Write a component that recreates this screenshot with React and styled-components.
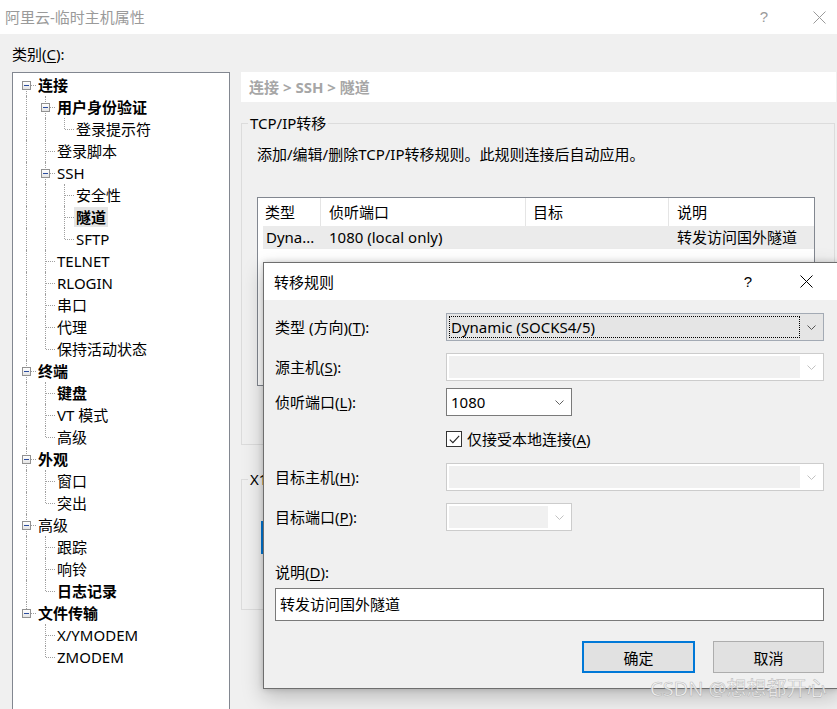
import React from "react";
import styled, { createGlobalStyle } from "styled-components";

const GlobalStyle = createGlobalStyle`
  html, body {
    margin: 0;
    padding: 0;
    background: #f0f0f0;
    overflow: hidden;
  }
  body {
    font-family: "Segoe UI", "Noto Sans", "Noto Sans CJK SC", sans-serif;
    font-size: 15px;
    color: #000;
  }
  * {
    box-sizing: border-box;
  }
  u {
    text-underline-offset: 2px;
  }
`;

const TREE = [
  {
    label: "连接",
    bold: true,
    children: [
      { label: "用户身份验证", bold: true, children: [{ label: "登录提示符" }] },
      { label: "登录脚本" },
      {
        label: "SSH",
        children: [
          { label: "安全性" },
          { label: "隧道", bold: true, selected: true },
          { label: "SFTP" },
        ],
      },
      { label: "TELNET" },
      { label: "RLOGIN" },
      { label: "串口" },
      { label: "代理" },
      { label: "保持活动状态" },
    ],
  },
  {
    label: "终端",
    bold: true,
    children: [{ label: "键盘", bold: true }, { label: "VT 模式" }, { label: "高级" }],
  },
  { label: "外观", bold: true, children: [{ label: "窗口" }, { label: "突出" }] },
  {
    label: "高级",
    children: [{ label: "跟踪" }, { label: "响铃" }, { label: "日志记录", bold: true }],
  },
  { label: "文件传输", bold: true, children: [{ label: "X/YMODEM" }, { label: "ZMODEM" }] },
];

// walk the tree into rows, remembering which ancestors were last in their list
function flatten(nodes, ancestorsLast = [], out = []) {
  nodes.forEach((node, i) => {
    const isLast = i === nodes.length - 1;
    out.push({
      ...node,
      ancestorsLast,
      isLast,
      isFirstRoot: ancestorsLast.length === 0 && i === 0,
    });
    if (node.children) flatten(node.children, [...ancestorsLast, isLast], out);
  });
  return out;
}

const ROWS = flatten(TREE);

function Chevron({ color }) {
  return (
    <svg width="9" height="5" viewBox="0 0 9 5">
      <path d="M0.5 0.5 L4.5 4.5 L8.5 0.5" stroke={color} strokeWidth="1" fill="none" />
    </svg>
  );
}

function CloseIcon({ color }) {
  return (
    <svg width="13" height="13" viewBox="0 0 13 13">
      <path d="M0.5 0.5 L12.5 12.5 M12.5 0.5 L0.5 12.5" stroke={color} strokeWidth="1" fill="none" />
    </svg>
  );
}

function App() {
  return (
    <Root>
      <GlobalStyle />
      <TitleBar $height={34} $padLeft={5} $padRight={11}>
        <WindowTitle $color="#9a9a9a">阿里云-临时主机属性</WindowTitle>
        <TitleActions $gap={45}>
          <HelpGlyph $color="#9a9a9a">?</HelpGlyph>
          <CloseIcon color="#9a9a9a" />
        </TitleActions>
      </TitleBar>

      <Body>
        <CategoryLabel>
          类别(<u>C</u>):
        </CategoryLabel>
        <Columns>
          <TreePane>
            {ROWS.map((row, i) => (
              <TreeRow key={i}>
                {row.ancestorsLast.map((last, d) => (
                  <LineCell key={d} $kind={last ? "blank" : "pipe"} />
                ))}
                <LineCell $kind={row.isFirstRoot ? "start" : row.isLast ? "elbow" : "tee"}>
                  {row.children && (
                    <Expander>
                      <Minus />
                    </Expander>
                  )}
                </LineCell>
                <NodeLabel $bold={row.bold} $selected={row.selected}>
                  {row.label}
                </NodeLabel>
              </TreeRow>
            ))}
          </TreePane>

          <RightPane>
            <Breadcrumb>连接 &gt; SSH &gt; 隧道</Breadcrumb>

            <Group $mt={11}>
              <Legend>TCP/IP转移</Legend>
              <GroupBody $pad="11px 20px 58px 15px">
                <Description>添加/编辑/删除TCP/IP转移规则。此规则连接后自动应用。</Description>
                <ListView>
                  <ListHeader>
                    <HeaderCell $pl={7}>类型</HeaderCell>
                    <HeaderCell $pl={8}>侦听端口</HeaderCell>
                    <HeaderCell $pl={7}>目标</HeaderCell>
                    <HeaderCell $pl={8} $last>
                      说明
                    </HeaderCell>
                  </ListHeader>
                  <ListRow>
                    <RowCell $pl={3}>Dyna...</RowCell>
                    <RowCell $pl={8}>1080 (local only)</RowCell>
                    <RowCell $pl={8} />
                    <RowCell $pl={8}>转发访问国外隧道</RowCell>
                  </ListRow>
                </ListView>
              </GroupBody>
            </Group>

            <Group $mt={24}>
              <Legend>X11转移</Legend>
              <GroupBody $pad="32px 0 55px 19px">
                <HiddenButton>设置</HiddenButton>
              </GroupBody>
            </Group>
          </RightPane>
        </Columns>
      </Body>

      <Dialog>
        <TitleBar $height={37} $padLeft={10} $padRight={25}>
          <WindowTitle $color="#000">转移规则</WindowTitle>
          <TitleActions $gap={48}>
            <HelpGlyph $color="#000">?</HelpGlyph>
            <CloseIcon color="#000" />
          </TitleActions>
        </TitleBar>

        <DialogBody>
          <FormRow $mt={13}>
            <FieldLabel>
              类型 (方向)(<u>T</u>):
            </FieldLabel>
            <Combo $variant="focus" $width={378}>
              <ComboField $variant="focus">Dynamic (SOCKS4/5)</ComboField>
              <ComboArrow>
                <Chevron color="#555" />
              </ComboArrow>
            </Combo>
          </FormRow>

          <FormRow $mt={12}>
            <FieldLabel>
              源主机(<u>S</u>):
            </FieldLabel>
            <Combo $variant="disabled" $width={378}>
              <ComboField $variant="disabled" />
              <ComboArrow>
                <Chevron color="#c2c2c2" />
              </ComboArrow>
            </Combo>
          </FormRow>

          <FormRow $mt={7}>
            <FieldLabel>
              侦听端口(<u>L</u>):
            </FieldLabel>
            <Combo $variant="normal" $width={126}>
              <ComboField $variant="normal">1080</ComboField>
              <ComboArrow>
                <Chevron color="#606060" />
              </ComboArrow>
            </Combo>
          </FormRow>

          <FormRow $mt={15}>
            <span />
            <CheckLine>
              <CheckBox>
                <svg width="11" height="9" viewBox="0 0 11 9">
                  <path d="M0.8 4.6 L3.9 7.7 L10.2 0.8" stroke="#222" strokeWidth="1.1" fill="none" />
                </svg>
              </CheckBox>
              <span>
                仅接受本地连接(<u>A</u>)
              </span>
            </CheckLine>
          </FormRow>

          <FormRow $mt={16}>
            <FieldLabel>
              目标主机(<u>H</u>):
            </FieldLabel>
            <Combo $variant="disabled" $width={378}>
              <ComboField $variant="disabled" />
              <ComboArrow>
                <Chevron color="#c2c2c2" />
              </ComboArrow>
            </Combo>
          </FormRow>

          <FormRow $mt={12}>
            <FieldLabel>
              目标端口(<u>P</u>):
            </FieldLabel>
            <Combo $variant="disabled" $width={126}>
              <ComboField $variant="disabled" />
              <ComboArrow>
                <Chevron color="#c2c2c2" />
              </ComboArrow>
            </Combo>
          </FormRow>

          <NoteLabel>
            说明(<u>D</u>):
          </NoteLabel>
          <TextInput>转发访问国外隧道</TextInput>

          <ButtonRow>
            <DialogButton $default $width={113}>
              确定
            </DialogButton>
            <DialogButton $width={111}>取消</DialogButton>
          </ButtonRow>
        </DialogBody>
      </Dialog>

      <Watermark>CSDN @想想都开心</Watermark>
    </Root>
  );
}

export default App;

const Root = styled.div`
  position: relative;
  width: 837px;
  height: 709px;
  overflow: hidden;
  background: #f0f0f0;
`;

const TitleBar = styled.div`
  display: flex;
  align-items: center;
  justify-content: space-between;
  height: ${({ $height }) => $height}px;
  padding: 0 ${({ $padRight }) => $padRight}px 0 ${({ $padLeft }) => $padLeft}px;
  background: #fff;
`;

const WindowTitle = styled.span`
  color: ${({ $color }) => $color};
  line-height: 20px;
`;

const TitleActions = styled.div`
  display: flex;
  align-items: center;
  gap: ${({ $gap }) => $gap}px;
`;

const HelpGlyph = styled.span`
  color: ${({ $color }) => $color};
  font-family: "Liberation Sans", sans-serif;
  font-size: 15px;
  line-height: 20px;
`;

const Body = styled.div`
  padding: 10px 0 0 12px;
`;

const CategoryLabel = styled.div`
  line-height: 20px;
`;

const Columns = styled.div`
  display: flex;
  align-items: flex-start;
  gap: 11px;
  margin-top: 8px;
`;

const TreePane = styled.div`
  flex: none;
  width: 218px;
  height: 660px;
  padding: 1px 0 0 4px;
  border: 1px solid #828790;
  background: #fff;
`;

const TreeRow = styled.div`
  display: flex;
  align-items: center;
  height: 22px;
`;

const LineCell = styled.span`
  position: relative;
  flex: none;
  width: 19px;
  height: 22px;

  &::before {
    content: "";
    position: absolute;
    left: 9px;
    top: ${({ $kind }) => ($kind === "start" ? "11px" : "0")};
    height: ${({ $kind }) => ($kind === "elbow" || $kind === "start" ? "11px" : "22px")};
    border-left: 1px dotted #a0a0a0;
    display: ${({ $kind }) => ($kind === "blank" ? "none" : "block")};
  }

  &::after {
    content: "";
    position: absolute;
    left: 10px;
    top: 11px;
    width: 9px;
    border-top: 1px dotted #a0a0a0;
    display: ${({ $kind }) => ($kind === "pipe" || $kind === "blank" ? "none" : "block")};
  }
`;

const Expander = styled.span`
  position: absolute;
  left: 5px;
  top: 7px;
  z-index: 1;
  display: flex;
  align-items: center;
  justify-content: center;
  width: 9px;
  height: 9px;
  border: 1px solid #919191;
  background: linear-gradient(#ffffff, #e4e4e4);
`;

const Minus = styled.span`
  width: 5px;
  height: 1px;
  background: #2c4d9e;
`;

const NodeLabel = styled.span`
  height: 20px;
  padding: 0 2px;
  line-height: 20px;
  white-space: nowrap;
  font-weight: ${({ $bold }) => ($bold ? 700 : 400)};
  background: ${({ $selected }) => ($selected ? "#e5e5e5" : "transparent")};
`;

const RightPane = styled.div`
  flex: none;
  width: 595px;
`;

const Breadcrumb = styled.div`
  height: 30px;
  padding-left: 8px;
  line-height: 30px;
  background: #fff;
  color: #a6a6a6;
  font-weight: 700;
`;

const Group = styled.fieldset`
  margin: ${({ $mt }) => $mt}px 0 0;
  padding: 0;
  width: 594px;
  border: 1px solid #dcdcdc;
  min-width: 0;
`;

const Legend = styled.legend`
  margin-left: 6px;
  padding: 0 2px;
  line-height: 20px;
`;

const GroupBody = styled.div`
  padding: ${({ $pad }) => $pad};
`;

const Description = styled.div`
  line-height: 20px;
`;

const ListView = styled.div`
  margin-top: 33px;
  width: 558px;
  height: 189px;
  border: 1px solid #828790;
  background: #fff;
`;

const ListHeader = styled.div`
  display: grid;
  grid-template-columns: 63px 205px 143px 1fr;
  height: 28px;
`;

const HeaderCell = styled.div`
  padding-left: ${({ $pl }) => $pl}px;
  line-height: 28px;
  border-right: ${({ $last }) => ($last ? "none" : "1px solid #e5e5e5")};
`;

const ListRow = styled.div`
  display: grid;
  grid-template-columns: 58px 205px 143px 1fr;
  height: 23px;
  margin-left: 5px;
  background: #ebebeb;
`;

const RowCell = styled.div`
  padding-left: ${({ $pl }) => $pl}px;
  line-height: 23px;
  white-space: nowrap;
  overflow: hidden;
`;

const HiddenButton = styled.div`
  width: 120px;
  height: 33px;
  border: 2px solid #0078d7;
  background: #e1e1e1;
  text-align: center;
  line-height: 29px;
`;

const Dialog = styled.div`
  position: absolute;
  left: 263px;
  top: 262px;
  width: 576px;
  border: 1px solid #6e6e6e;
  background: #f0f0f0;
  box-shadow: 0 0 6px rgba(0, 0, 0, 0.18), 0 8px 20px rgba(0, 0, 0, 0.22);
`;

const DialogBody = styled.div`
  padding: 0 13px 15px 11px;
`;

const FormRow = styled.div`
  display: grid;
  grid-template-columns: 171px 1fr;
  align-items: center;
  margin-top: ${({ $mt }) => $mt}px;
`;

const FieldLabel = styled.span`
  line-height: 20px;
  white-space: nowrap;
`;

const comboBorder = {
  focus: "#a3aab4",
  disabled: "#cccccc",
  normal: "#7a7a7a",
};

const Combo = styled.div`
  display: flex;
  width: ${({ $width }) => $width}px;
  height: 28px;
  padding: 2px 0 2px 2px;
  border: 1px solid ${({ $variant }) => comboBorder[$variant]};
  background: ${({ $variant }) => ($variant === "focus" ? "#e5e5e5" : "#fff")};
`;

const ComboField = styled.div`
  flex: 1;
  padding-left: 1px;
  line-height: 20px;
  white-space: nowrap;
  overflow: hidden;
  border: 1px ${({ $variant }) => ($variant === "focus" ? "dotted #000" : "solid transparent")};
  background: ${({ $variant }) => ($variant === "disabled" ? "#f0f0f0" : "transparent")};
`;

const ComboArrow = styled.div`
  display: flex;
  align-items: center;
  justify-content: center;
  flex: none;
  width: 23px;
`;

const CheckLine = styled.label`
  display: flex;
  align-items: center;
  gap: 5px;
  height: 16px;
  line-height: 20px;
`;

const CheckBox = styled.span`
  display: flex;
  align-items: center;
  justify-content: center;
  width: 16px;
  height: 16px;
  border: 1px solid #333;
  background: #fff;
`;

const NoteLabel = styled.div`
  margin-top: 31px;
  line-height: 20px;
`;

const TextInput = styled.div`
  margin-top: 6px;
  width: 549px;
  height: 33px;
  padding-left: 4px;
  line-height: 31px;
  border: 1px solid #7a7a7a;
  background: #fff;
`;

const ButtonRow = styled.div`
  display: flex;
  justify-content: flex-end;
  gap: 18px;
  width: 549px;
  margin-top: 20px;
`;

const DialogButton = styled.button`
  width: ${({ $width }) => $width}px;
  height: 32px;
  padding: 0;
  font: inherit;
  color: #000;
  background: #e1e1e1;
  border: ${({ $default }) => ($default ? "2px solid #0078d7" : "1px solid #adadad")};
`;

const Watermark = styled.div`
  position: absolute;
  left: 650px;
  top: 677px;
  font-family: "Noto Sans", "Noto Sans CJK SC", sans-serif;
  font-size: 20px;
  line-height: 24px;
  color: rgba(248, 248, 248, 0.9);
  -webkit-text-stroke: 0.6px rgba(150, 150, 150, 0.6);
  white-space: nowrap;
`;
